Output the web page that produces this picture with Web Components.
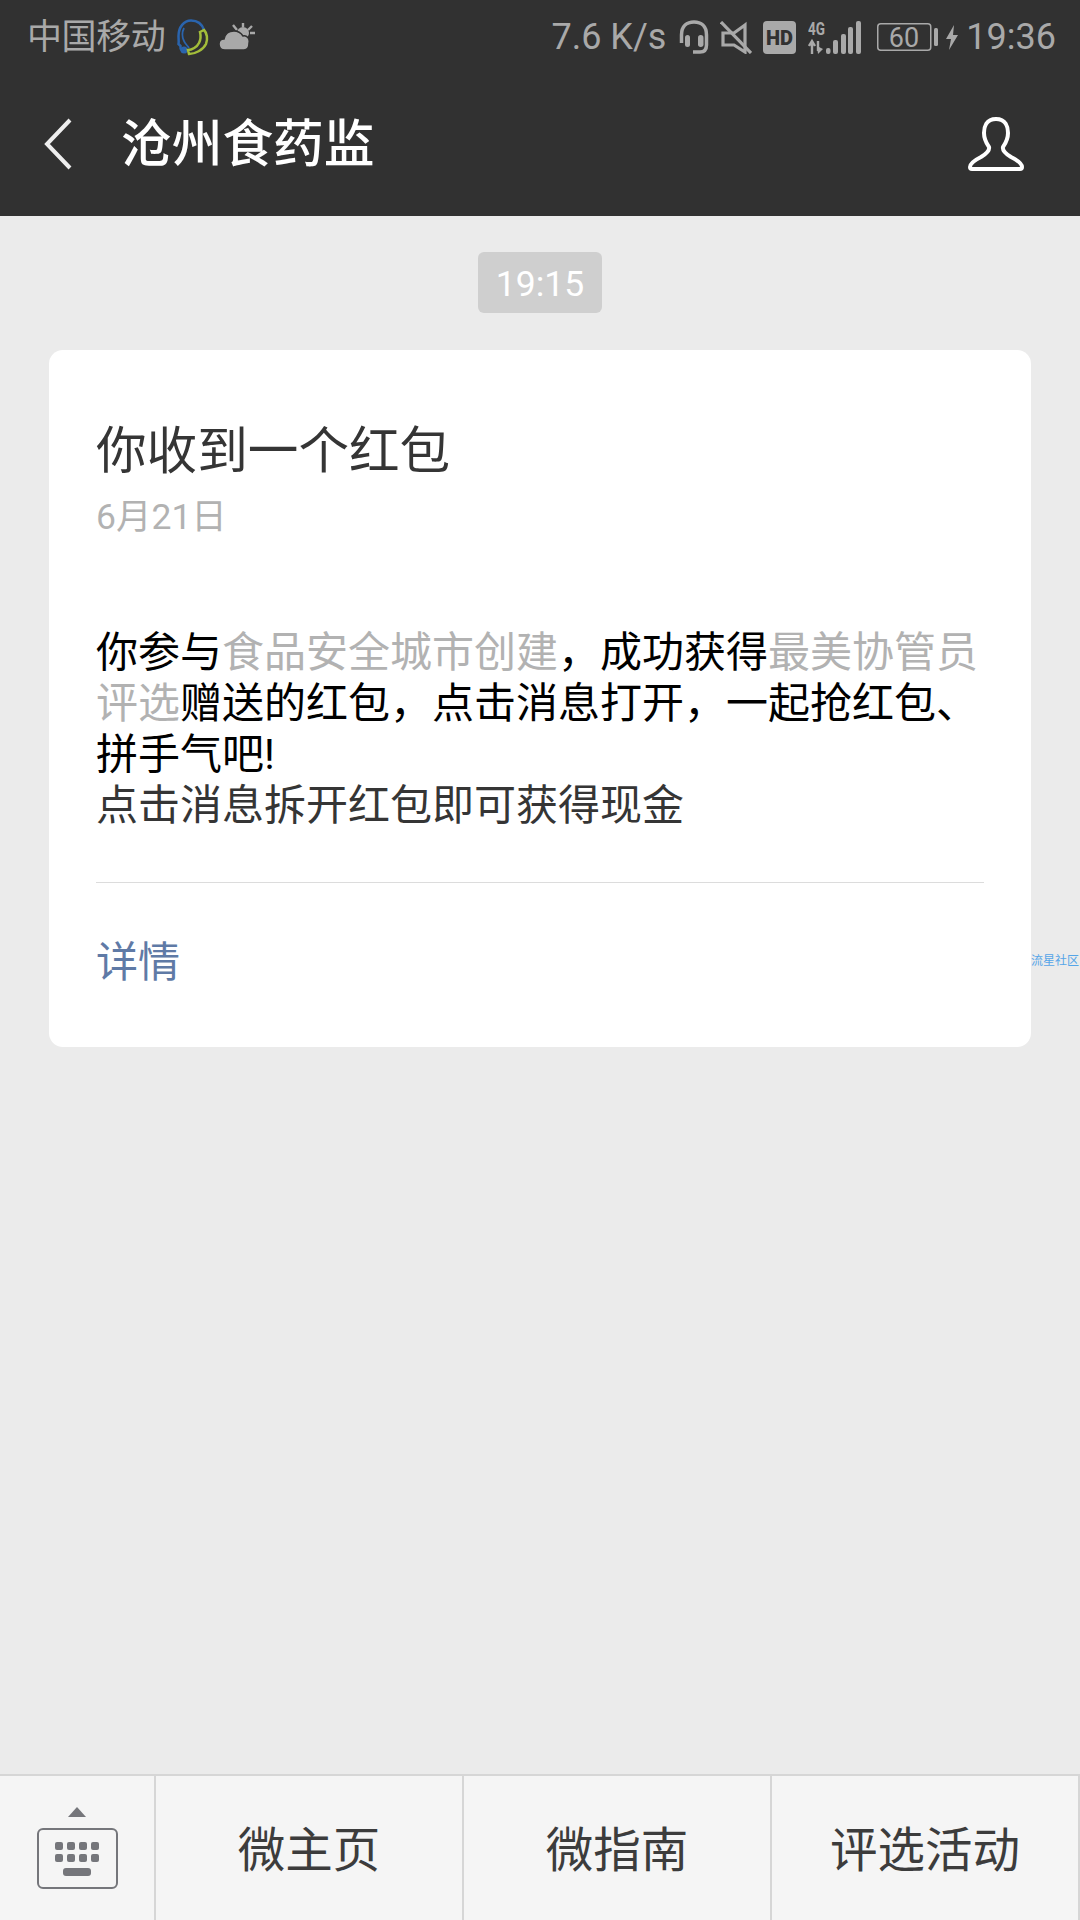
<!DOCTYPE html>
<html lang="zh-CN">
<head>
<meta charset="utf-8">
<title>沧州食药监</title>
<style>
   html, body { margin: 0; padding: 0; background: #ebebeb; }
   body { font-family: Roboto, "Noto Sans CJK SC", sans-serif; }
</style>
</head>
<body>
<wx-app></wx-app>
<script>

const define = ( selector, css, html ) => {
   customElements.define( selector, class extends HTMLElement {
      constructor() { super();
         const templateEl = document.createElement( 'template' );
         templateEl.innerHTML = '<style>' + css + '</style>' + html;
         this.attachShadow( {mode: 'open'} )
            .appendChild( templateEl.content.cloneNode( true ) );
      }
   });
}

define( 'wx-status-bar', `
   :host { display: flex; align-items: center; height: 72px; padding: 2px 24px 0 27px; box-sizing: border-box;
      color: #a9a9a9; font-size: 36px; line-height: 40px; }
   .carrier { font-size: 35px; letter-spacing: -0.4px; margin: 2px 12px 0 0; }
   .speed { margin-left: auto; margin-right: 13px; }
   svg { display: block; flex: none; }
`, `
   <span class="carrier">中国移动</span>
   <svg width="32" height="37" viewBox="0 0 32 37" fill="none" style="margin-right:10px">
      <path d="M9 33 C5 33 3 30 3.500 27 L1.500 25 C2 22 1.500 20 1.500 17 C1.500 8 7 1.500 14 1.500 C20 1.500 25 5 27 11" stroke="#2a64ad" stroke-width="2.500"/>
      <path d="M7 9 C5 13 5 18 7 22 C8 25 11 27 12 29" stroke="#2a64ad" stroke-width="1.800"/>
      <circle cx="7" cy="31" r="3.500" fill="#2a64ad"/>
      <path d="M23 13 L27 11 C30 14 31 20 29 25 C26 31 18 35 12 35 L11 31 C15 31 20 28 22 24 C24 20 24 17 23 13 Z" stroke="#a3bd3a" stroke-width="2.500"/>
   </svg>
   <svg width="36" height="28" viewBox="0 0 36 28" fill="#a9a9a9">
      <circle cx="24" cy="10" r="6"/>
      <path d="M14 2 L18 7 M24 0 L24 4 M33 3 L29 7 M36 10 L31 10" stroke="#a9a9a9" stroke-width="2.400"/>
      <path d="M6 27 C2 27 0 24 0 21 C0 18 2 16 5 16 C6 11 10 8 15 8 C19 8 22 10 24 13 C28 12 31 16 30 20 C30 24 28 27 25 27 Z" stroke="#313131" stroke-width="1.500"/>
   </svg>
   <span class="speed">7.6 K/s</span>
   <svg width="30" height="34" viewBox="0 0 30 34" fill="none" stroke="#a9a9a9" stroke-width="3.500" style="margin-right:11px">
      <path d="M2.500 23 L2.500 15 C2.500 6 8 2 15 2 C22 2 27.500 6 27.500 15 L27.500 25 C27.500 30 25 32 21 32 L14 32"/>
      <rect x="6" y="15" width="5" height="12" rx="2.500" fill="#a9a9a9" stroke="none"/>
      <rect x="19" y="15" width="5.500" height="12" rx="2.700" fill="#a9a9a9" stroke="none"/>
   </svg>
   <svg width="32" height="33" viewBox="0 0 32 33" fill="none" stroke="#a9a9a9" stroke-width="3.200" style="margin-right:11px">
      <path d="M1 1 L31 32"/>
      <path d="M25 4 L14 12 L3 12 L3 24 L14 24 L25 31 Z"/>
   </svg>
   <svg width="33" height="33" viewBox="0 0 33 33" style="margin-right:12px">
      <rect width="33" height="33" rx="4" fill="#a9a9a9"/>
      <text x="16.500" y="24" text-anchor="middle" font-family="Roboto" font-weight="900" font-size="21" textLength="27" lengthAdjust="spacingAndGlyphs" fill="#313131">HD</text>
   </svg>
   <svg width="54" height="41" viewBox="0 -4 54 41" fill="#a9a9a9" style="margin-right:15px">
      <text x="0" y="14" font-family="Roboto" font-weight="700" font-size="18" textLength="17" lengthAdjust="spacingAndGlyphs">4G</text>
      <path d="M4 33 L4 22 M1 25 L4 20 L7 25" fill="none" stroke="#a9a9a9" stroke-width="2.400"/>
      <path d="M10 20 L10 30" fill="none" stroke="#a9a9a9" stroke-width="2.400"/>
      <path d="M9 25 L15 28 L10 33 Z"/>
      <rect x="18" y="27" width="4.500" height="6" rx="2"/>
      <rect x="25" y="19" width="5" height="14" rx="2"/>
      <rect x="33" y="13" width="5" height="20" rx="2"/>
      <rect x="40" y="6" width="5" height="27" rx="2"/>
      <rect x="48" y="0" width="5" height="33" rx="2"/>
   </svg>
   <svg width="61" height="36" viewBox="0 -4 61 36" style="margin-right:8px">
      <rect x="0.750" y="0.750" width="53" height="26.500" rx="3" fill="none" stroke="#a9a9a9" stroke-width="1.500"/>
      <rect x="57" y="5" width="4" height="18" rx="1.500" fill="#a9a9a9"/>
      <text x="27" y="23.500" text-anchor="middle" font-family="Roboto" font-size="27" fill="#a9a9a9">60</text>
   </svg>
   <svg width="12" height="25" viewBox="0 0 12 25" fill="#a9a9a9" style="margin-right:8px">
      <path d="M8 0 L0 14 L5 14 L3 25 L12 10 L7 10 Z"/>
   </svg>
   <span>19:36</span>
`);

define( 'wx-nav-bar', `
   :host { display: flex; align-items: center; height: 144px; padding: 0 56px 0 44px; box-sizing: border-box;
      color: #fff; font-size: 50.700px; font-weight: 500; line-height: 60px; }
   .title { margin-left: 49px; margin-top: 1px; flex: 1; }
   svg { display: block; flex: none; }
`, `
   <svg width="28" height="52" viewBox="0 0 28 52" fill="none" stroke="#eee" stroke-width="4"><path d="M26 2 L3 26 L26 50"/></svg>
   <span class="title">沧州食药监</span>
   <svg width="56" height="54" viewBox="0 0 56 54" fill="none" stroke="#fff" stroke-width="4" stroke-linejoin="round">
      <path d="M28 2 C18 2 16 10 16 16 C16 23 19 27 21 30 C22 34 18 37 13 40 C7 43 2 46 2 50 C2 51.500 3 52 4 52 L52 52 C53 52 54 51.500 54 50 C54 46 49 43 43 40 C38 37 34 34 35 30 C37 27 40 23 40 16 C40 10 38 2 28 2 Z"/>
   </svg>
`);

define( 'wx-time-pill', `
   :host { display: block; width: max-content; margin: 36px auto 0; padding: 0 18px; height: 61px; line-height: 65px;
      border-radius: 6px; background: #cfcfcf; color: #fff; font-size: 35.500px; }
`, `<slot></slot>`);

define( 'wx-msg-card', `
   :host { display: block; position: relative; margin: 37px 49px 0; padding: 72px 47px 0; height: 697px; box-sizing: border-box;
      background: #fff; border-radius: 14px; }
   .title { font-size: 50.600px; line-height: 60px; color: #353535; }
   .date { margin-top: 13px; font-size: 35.500px; line-height: 44px; color: #b2b2b2; }
   .body { margin-top: 88px; font-size: 42px; line-height: 51px; color: #000; white-space: nowrap; }
   .body i { font-style: normal; color: #b2b2b2; }
   .body .plain { color: #353535; }
   .line { margin-top: 51px; height: 1px; background: #dcdcdc; }
   .more { margin-top: 50px; font-size: 42px; line-height: 60px; color: #5f7aa6; }
   .mark { position: absolute; left: 982px; top: 603px; white-space: nowrap; font-size: 12px; line-height: 16px; color: #55a5e8; }
`, `
   <div class="title">你收到一个红包</div>
   <div class="date">6月21日</div>
   <div class="body">
      <div>你参与<i>食品安全城市创建</i>，成功获得<i>最美协管员</i></div>
      <div><i>评选</i>赠送的红包，点击消息打开，一起抢红包、</div>
      <div>拼手气吧!</div>
      <div class="plain">点击消息拆开红包即可获得现金</div>
   </div>
   <div class="line"></div>
   <div class="more">详情</div>
   <span class="mark">流星社区</span>
`);

define( 'wx-menu-item', `
   :host { display: flex; flex: none; width: 306px; align-items: center; justify-content: center; border-left: 2px solid #d6d6d6;
      font-size: 47.500px; color: #3c3c3c; padding-bottom: 3px; }
`, `<slot></slot>`);

define( 'wx-menu-bar', `
   :host { display: flex; height: 146px; box-sizing: border-box; border-top: 2px solid #d6d6d6; border-right: 2px solid #d6d6d6; background: #f5f5f5; }
   .keys { display: flex; flex-direction: column; align-items: center; width: 154px; flex: none; box-sizing: border-box; padding-top: 31px; }
   .arrow { width: 0; height: 0; border: 9px solid transparent; border-top: 0; border-bottom: 10px solid #75767b; }
   .board { display: grid; grid-template-columns: repeat(4, 8px); gap: 4px; justify-content: center; align-content: center;
      width: 81px; height: 61px; margin-top: 11px; box-sizing: border-box; border: 2px solid #75767b; border-radius: 6px; }
   .board b { height: 8px; border-radius: 2px; background: #75767b; }
   .board b.space { grid-column: 1 / -1; width: 28px; justify-self: center; margin-top: 2px; border-radius: 3px; }
`, `
   <div class="keys">
      <div class="arrow"></div>
      <div class="board"><b></b><b></b><b></b><b></b><b></b><b></b><b></b><b></b><b class="space"></b></div>
   </div>
   <slot></slot>
`);

define( 'wx-app', `
   :host { display: flex; flex-direction: column; height: 1920px; overflow: hidden; background: #ebebeb; }
   header { background: #313131; }
   main { flex: 1; }
`, `
   <header><wx-status-bar></wx-status-bar><wx-nav-bar></wx-nav-bar></header>
   <main><wx-time-pill>19:15</wx-time-pill><wx-msg-card></wx-msg-card></main>
   <wx-menu-bar>
      <wx-menu-item>微主页</wx-menu-item>
      <wx-menu-item>微指南</wx-menu-item>
      <wx-menu-item>评选活动</wx-menu-item>
   </wx-menu-bar>
`);
</script>
</body>
</html>
